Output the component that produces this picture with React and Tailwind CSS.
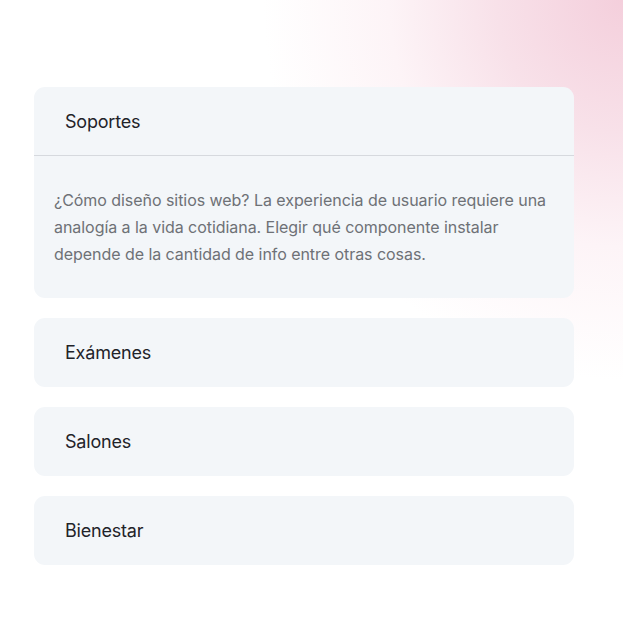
import React from "react";

const items = [
  {
    title: "Soportes",
    open: true,
    body: "¿Cómo diseño sitios web? La experiencia de usuario requiere una analogía a la vida cotidiana. Elegir qué componente instalar depende de la cantidad de info entre otras cosas.",
  },
  { title: "Exámenes" },
  { title: "Salones" },
  { title: "Bienestar" },
];

const App = () => {
  return (
    <div
      className="min-h-[639px] w-full bg-white bg-[radial-gradient(ellipse_360px_380px_at_100%_0%,#f4cfdc_0%,#f8e1e9_35%,#fdf4f7_65%,#ffffff_100%)] pt-[87px] pl-[34px]"
      style={{ fontFamily: "Inter, 'Noto Sans', sans-serif" }}
    >
      <div className="flex w-[540px] flex-col gap-[20px]">
        {items.map((item) => (
          <div key={item.title} className="rounded-[11px] bg-[#f3f6f9]">
            <div
              className={
                "flex h-[69px] items-center pl-[31px] text-[18px] tracking-[-0.2px] text-[#1f2329]" +
                (item.open ? " border-b border-[#d6d9de]" : "")
              }
            >
              {item.title}
            </div>
            {item.open && (
              <div className="px-[20px] pt-[31px] pb-[30px] text-[16px] leading-[27px] tracking-[-0.05px] text-[#6e7176]">
                {item.body}
              </div>
            )}
          </div>
        ))}
      </div>
    </div>
  );
};

export default App;
